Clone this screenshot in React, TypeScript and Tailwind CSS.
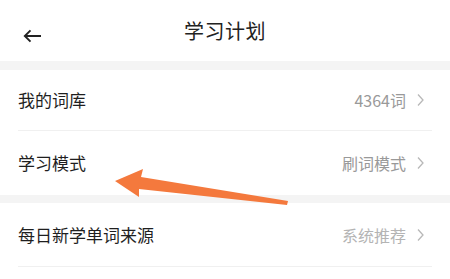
import React from 'react';

const font = { fontFamily: '"Noto Sans CJK SC", "Noto Sans", sans-serif' };

const Chevron = () => (
    <svg width="9" height="14" viewBox="0 0 9 14" className="ml-[10px]">
        <path d="M2 1.5 L7 7 L2 12.5" fill="none" stroke="#b8b8b8" strokeWidth="1.3" />
    </svg>
);

interface RowProps {
    label: string;
    value: string;
    height: string;
    divider?: boolean;
    faded?: boolean;
}

const Row: React.FC<RowProps> = ({ label, value, height, divider, faded }) => (
    <div className="bg-white px-[18px]">
        <div className={`flex items-center justify-between ${height} ${divider ? 'border-b border-[#f0f0f0]' : ''}`}>
            <span className="text-[17px] text-[#1f1f1f]">{label}</span>
            <div className="flex items-center pr-[7px]">
                <span className={`text-[16px] ${faded ? 'text-[#b4b4b4]' : 'text-[#999999]'}`}>{value}</span>
                <Chevron />
            </div>
        </div>
    </div>
);

export default function App() {
    return (
        <div className="relative w-[450px] h-[279px] bg-white overflow-hidden" style={font}>
            {/* Header */}
            <div className="relative flex items-center justify-center h-[61px] bg-white">
                <svg width="19" height="14" viewBox="0 0 19 14" className="absolute left-[23px] top-[29px]">
                    <path d="M18 7 H2 M7.5 1.3 L1.8 7 L7.5 12.7" fill="none" stroke="#222" strokeWidth="1.9" />
                </svg>
                <h1 className="text-[20px] text-[#222] tracking-[0.5px]">学习计划</h1>
            </div>

            <div className="h-[9px] bg-[#f4f4f4]" />
            <Row label="我的词库" value="4364词" height="h-[61px]" divider />
            <Row label="学习模式" value="刷词模式" height="h-[64px]" />
            <div className="h-[8px] bg-[#f4f4f4]" />
            <Row label="每日新学单词来源" value="系统推荐" height="h-[64px]" divider faded />

            {/* Annotation arrow */}
            <svg className="absolute left-0 top-0" width="450" height="279" viewBox="0 0 450 279">
                <path
                    d="M115 181 L143 169 L141 177 L288 201 L287 205 L139 189 L139 197 Z"
                    fill="#f4793d"
                />
            </svg>
        </div>
    );
}
